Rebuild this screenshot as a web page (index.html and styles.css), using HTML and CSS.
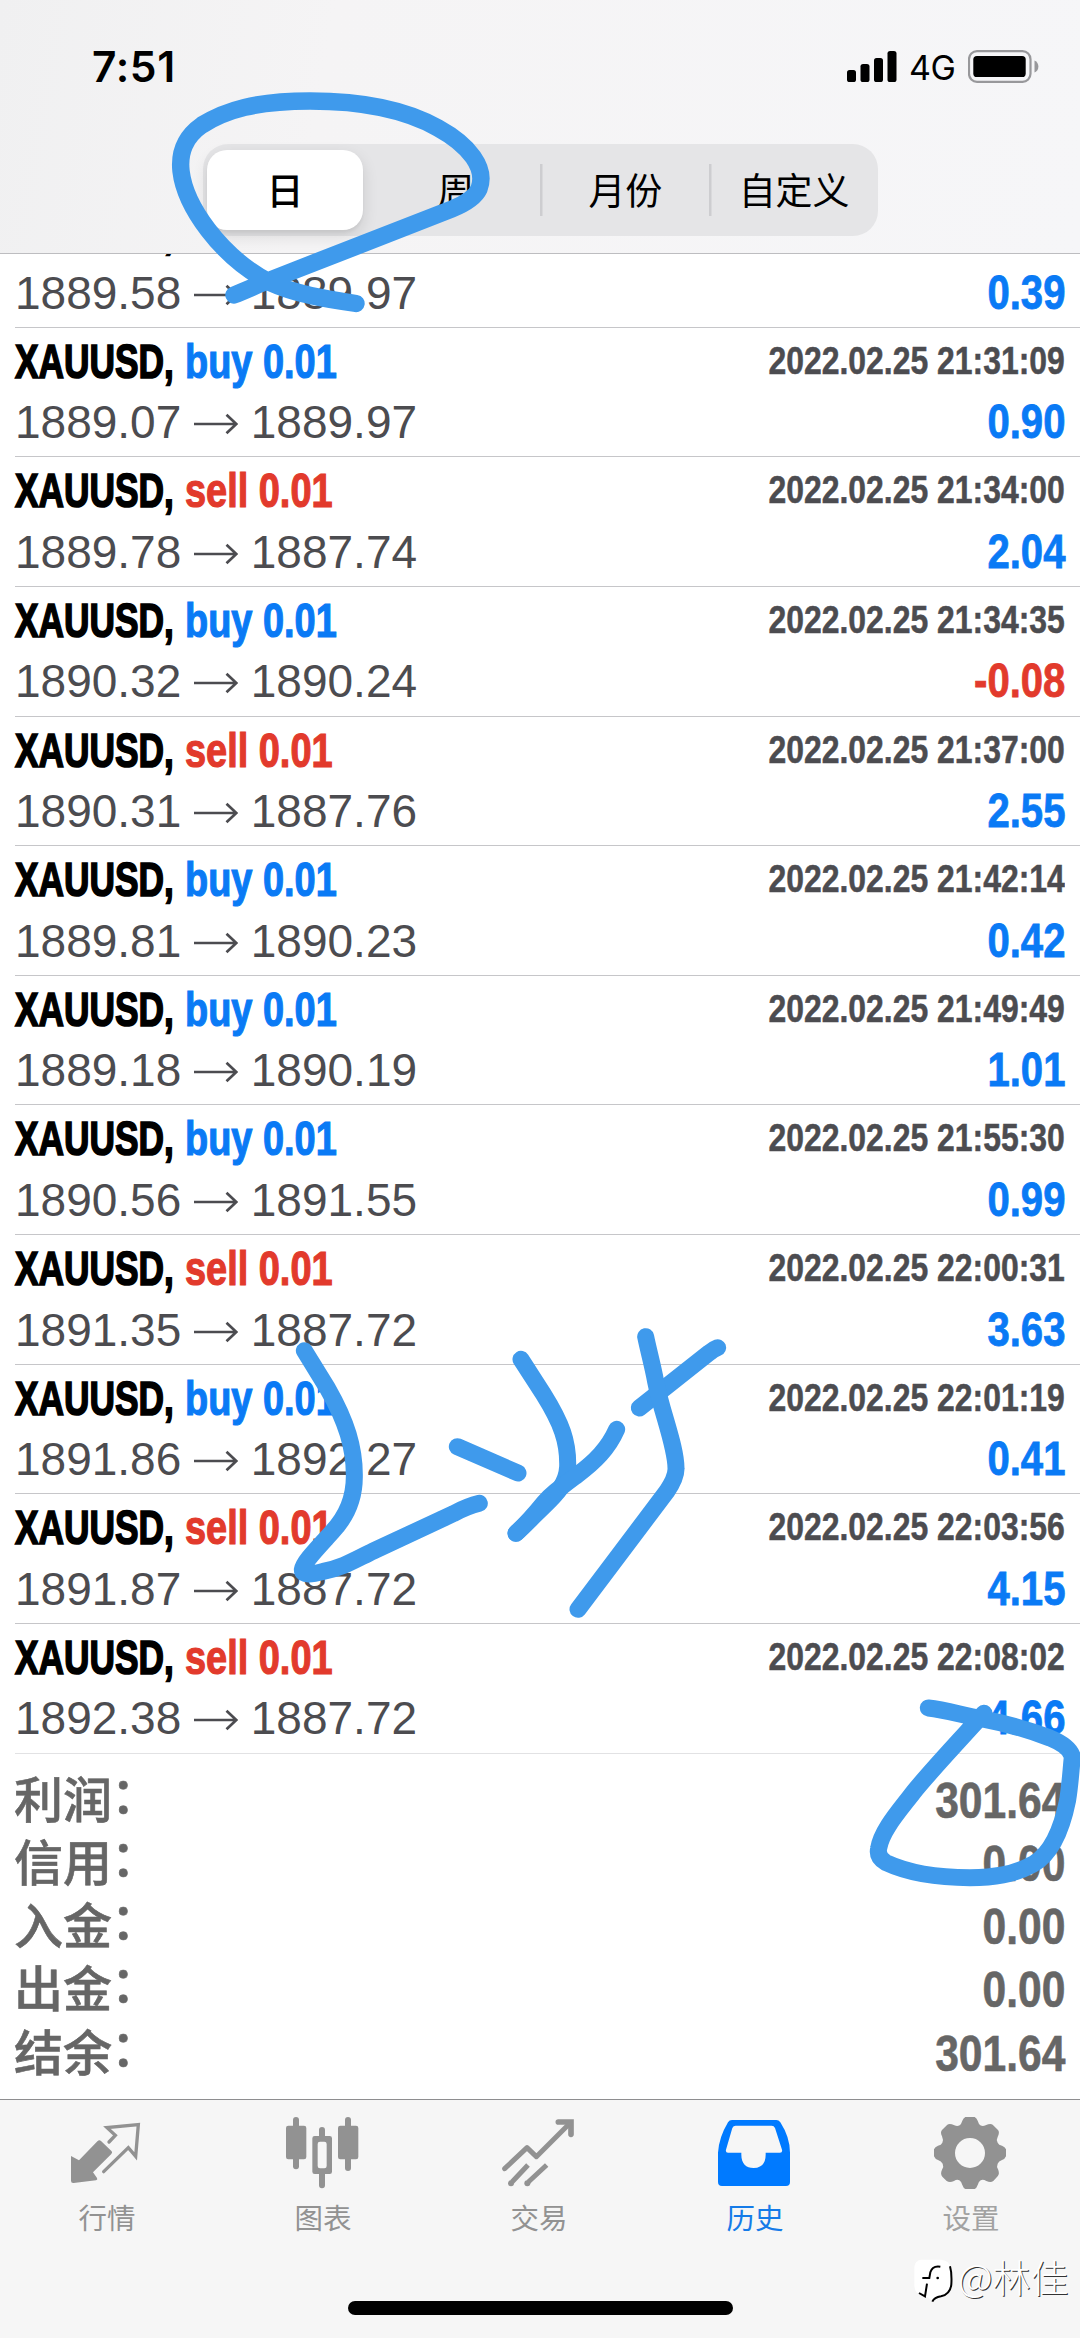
FILE: index.html
```html
<!DOCTYPE html>
<html lang="zh-CN">
<head>
<meta charset="utf-8">
<title>历史</title>
<link rel="stylesheet" href="styles.css">
</head>
<body>
<svg class="defs" width="0" height="0" aria-hidden="true">
  <symbol id="arrow" viewBox="0 0 44 22"><path d="M0 11H42M32.5 1.8L42.3 11L32.5 20.2" fill="none" stroke="#4c4c50" stroke-width="2.7"/></symbol>
</svg>
<div class="screen">
  <header class="header">
    <div class="status">
      <span class="clock">7:51</span>
      <span class="status-right">
        <svg class="signal" width="50" height="31" viewBox="0 0 50 31"><rect x="0" y="19" width="9" height="12" rx="2.6"/><rect x="13.5" y="13" width="9" height="18" rx="2.6"/><rect x="27" y="7" width="9" height="24" rx="2.6"/><rect x="40.5" y="0" width="9" height="31" rx="2.6"/></svg>
        <span class="net">4G</span>
        <svg class="battery" width="71" height="33" viewBox="0 0 71 33"><rect x="1" y="1.2" width="61.5" height="30.6" rx="8" fill="none" stroke="#98989b" stroke-width="2.2"/><rect x="5.3" y="6" width="52.4" height="21" rx="3.6"/><path d="M66.5 10.4c5.2 2 5.2 10.2 0 12.2z" fill="#98989b"/></svg>
      </span>
    </div>
    <nav class="segments">
      <span class="segment selected">日</span>
      <span class="segment">周</span>
      <span class="segment divided">月份</span>
      <span class="segment divided">自定义</span>
    </nav>
  </header>

  <main class="list">
    <section class="deal">
      <div class="top"><b class="symbol">XAUUSD,</b><b class="side buy">buy 0.01</b></div>
      <div class="bottom"><span>1889.58</span><svg class="arrow"><use href="#arrow"/></svg><span>1889.97</span><b class="profit">0.39</b></div>
    </section>
    <section class="deal">
      <div class="top"><b class="symbol">XAUUSD,</b><b class="side buy">buy 0.01</b><b class="time">2022.02.25 21:31:09</b></div>
      <div class="bottom"><span>1889.07</span><svg class="arrow"><use href="#arrow"/></svg><span>1889.97</span><b class="profit">0.90</b></div>
    </section>
    <section class="deal">
      <div class="top"><b class="symbol">XAUUSD,</b><b class="side sell">sell 0.01</b><b class="time">2022.02.25 21:34:00</b></div>
      <div class="bottom"><span>1889.78</span><svg class="arrow"><use href="#arrow"/></svg><span>1887.74</span><b class="profit">2.04</b></div>
    </section>
    <section class="deal">
      <div class="top"><b class="symbol">XAUUSD,</b><b class="side buy">buy 0.01</b><b class="time">2022.02.25 21:34:35</b></div>
      <div class="bottom"><span>1890.32</span><svg class="arrow"><use href="#arrow"/></svg><span>1890.24</span><b class="profit loss">-0.08</b></div>
    </section>
    <section class="deal">
      <div class="top"><b class="symbol">XAUUSD,</b><b class="side sell">sell 0.01</b><b class="time">2022.02.25 21:37:00</b></div>
      <div class="bottom"><span>1890.31</span><svg class="arrow"><use href="#arrow"/></svg><span>1887.76</span><b class="profit">2.55</b></div>
    </section>
    <section class="deal">
      <div class="top"><b class="symbol">XAUUSD,</b><b class="side buy">buy 0.01</b><b class="time">2022.02.25 21:42:14</b></div>
      <div class="bottom"><span>1889.81</span><svg class="arrow"><use href="#arrow"/></svg><span>1890.23</span><b class="profit">0.42</b></div>
    </section>
    <section class="deal">
      <div class="top"><b class="symbol">XAUUSD,</b><b class="side buy">buy 0.01</b><b class="time">2022.02.25 21:49:49</b></div>
      <div class="bottom"><span>1889.18</span><svg class="arrow"><use href="#arrow"/></svg><span>1890.19</span><b class="profit">1.01</b></div>
    </section>
    <section class="deal">
      <div class="top"><b class="symbol">XAUUSD,</b><b class="side buy">buy 0.01</b><b class="time">2022.02.25 21:55:30</b></div>
      <div class="bottom"><span>1890.56</span><svg class="arrow"><use href="#arrow"/></svg><span>1891.55</span><b class="profit">0.99</b></div>
    </section>
    <section class="deal">
      <div class="top"><b class="symbol">XAUUSD,</b><b class="side sell">sell 0.01</b><b class="time">2022.02.25 22:00:31</b></div>
      <div class="bottom"><span>1891.35</span><svg class="arrow"><use href="#arrow"/></svg><span>1887.72</span><b class="profit">3.63</b></div>
    </section>
    <section class="deal">
      <div class="top"><b class="symbol">XAUUSD,</b><b class="side buy">buy 0.01</b><b class="time">2022.02.25 22:01:19</b></div>
      <div class="bottom"><span>1891.86</span><svg class="arrow"><use href="#arrow"/></svg><span>1892.27</span><b class="profit">0.41</b></div>
    </section>
    <section class="deal">
      <div class="top"><b class="symbol">XAUUSD,</b><b class="side sell">sell 0.01</b><b class="time">2022.02.25 22:03:56</b></div>
      <div class="bottom"><span>1891.87</span><svg class="arrow"><use href="#arrow"/></svg><span>1887.72</span><b class="profit">4.15</b></div>
    </section>
    <section class="deal last">
      <div class="top"><b class="symbol">XAUUSD,</b><b class="side sell">sell 0.01</b><b class="time">2022.02.25 22:08:02</b></div>
      <div class="bottom"><span>1892.38</span><svg class="arrow"><use href="#arrow"/></svg><span>1887.72</span><b class="profit">4.66</b></div>
    </section>
    <section class="summary">
      <div class="total"><span>利润<i>：</i></span><b>301.64</b></div>
      <div class="total"><span>信用<i>：</i></span><b>0.00</b></div>
      <div class="total"><span>入金<i>：</i></span><b>0.00</b></div>
      <div class="total"><span>出金<i>：</i></span><b>0.00</b></div>
      <div class="total"><span>结余<i>：</i></span><b>301.64</b></div>
    </section>
  </main>

  <footer class="tabs">
    <div class="tab">
      <svg viewBox="30 48 228 222"><path fill="#929292" d="M36 168L60 181L116 123Q121 118 126 123L158 154Q161 158 157 162L102 217L114 234Q117 239 111 241L44 249Q36 250 36 242Z"/><path d="M150 126L169 106L144 83L238 74L230 169L208 143L134 215" fill="none" stroke="#929292" stroke-width="10" stroke-linecap="round" stroke-linejoin="miter"/></svg>
      <span>行情</span>
    </div>
    <div class="tab">
      <svg viewBox="678 48 228 222"><g fill="#929292"><rect x="681" y="77" width="61" height="101" rx="7"/><rect x="702" y="51" width="18" height="157" rx="9"/><rect x="837" y="77" width="61" height="101" rx="7"/><rect x="858" y="51" width="18" height="162" rx="9"/><path d="M780 108V90a9 9 0 0 1 18 0V108H812Q819 108 819 115V215Q819 222 812 222H798V256a9 9 0 0 1-18 0V222H767Q760 222 760 215V115Q760 108 767 108ZM783 125Q776 125 776 132V198Q776 205 783 205H796Q803 205 803 198V132Q803 125 796 125Z" fill-rule="evenodd"/></g></svg>
      <span>图表</span>
    </div>
    <div class="tab">
      <svg viewBox="36 48 228 222"><g fill="none" stroke="#929292" stroke-width="15"><path d="M47 206L114 143L142 170L244 68" stroke-linejoin="round" stroke-linecap="round"/><path d="M208 66H246V103" stroke-width="17" stroke-linecap="round"/><path d="M117 195L69 246M173 195L118 246"/></g><g fill="#929292"><circle cx="66" cy="250" r="9"/><circle cx="115" cy="250" r="9"/></g></svg>
      <span>交易</span>
    </div>
    <div class="tab active">
      <svg viewBox="684 48 228 222"><path fill="#007aff" fill-rule="evenodd" d="M729 60H862Q869 60 874 67Q903 112 903 158V246Q903 258 891 258H699Q687 258 687 246V158Q690 112 717 67Q721 60 729 60ZM740 77Q733 77 730 84L711 149Q709 157 717 158H757V164C757 190 771 204 794 204S830 190 830 164V158H873Q881 157 879 149L858 84Q855 77 848 77Z"/></svg>
      <span>历史</span>
    </div>
    <div class="tab muted">
      <svg viewBox="102 48 228 222"><path fill="#929292" fill-rule="evenodd" d="M199 51H227Q233 54 236 62Q239 72 244 76Q251 80 260 76Q274 69 281 74L297 90Q303 96 296 111Q291 119 296 128Q299 135 309 137Q318 140 321 148V169Q318 177 309 180Q299 183 296 191Q292 200 297 208Q303 221 296 229L283 243Q275 249 262 243Q252 237 245 241Q239 245 236 255Q233 264 227 267H199Q193 264 190 255Q187 245 181 241Q174 237 165 243Q152 249 143 243L130 230Q123 221 129 209Q135 199 131 191Q127 183 117 180Q108 177 105 169V148Q108 140 117 137Q127 135 130 128Q134 120 129 109Q123 97 129 90L145 74Q152 69 166 76Q175 80 182 76Q187 72 190 62Q193 54 199 51ZM213 114a45 45 0 1 0 0 90a45 45 0 1 0 0-90Z"/></svg>
      <span>设置</span>
    </div>
    <div class="home"></div>
  </footer>

  <svg class="ink" width="1080" height="2338" viewBox="0 0 1080 2338">
    <path d="M234 295C247 290 257 285 270 280L452 209Q474 200 479 189C487 168 469 145 438 128C408 111 366 101 310 101C256 101 226 110 202 125C185 137 179 152 181 171C185 206 220 256 269 282C295 294 325 299 356 303.5"/>
    <g transform="translate(240 1290) scale(.33333)">
      <path d="M193 182L262 294C320 395 344 475 343 560C343 620 320 680 275 727C230 777 190 817 187 839C187 857 215 854 250 844C310 832 340 812 400 783L640 671Q684 648 718 640"/>
      <path d="M652 470L834 549"/>
      <path d="M843 208L910 312C965 400 985 455 983 530C980 590 940 620 890 670Q850 710 828 730"/>
      <path d="M1130 418C1105 475 1065 515 1010 556C955 597 933 613 912 638Q870 690 828 730"/>
      <path d="M1198 354L1408 188Q1420 178 1433 173"/>
      <path d="M1217 140C1225 180 1238 225 1247 275C1266 370 1308 470 1308 535Q1309 562 1280 605L1014 958"/>
    </g>
    <g transform="translate(780 1640) scale(.33333)">
      <path d="M445 204C500 210 550 227 600 235C690 252 760 275 810 294Q870 319 877 350C872 400 871 430 863 480C845 570 815 640 760 672C700 705 640 713 570 713C470 713 380 697 318 668Q290 652 296 625C305 570 360 510 400 457C450 395 530 310 612 220"/>
    </g>
  </svg>

  <div class="watermark">
    <svg width="40" height="46" viewBox="0 0 120 138"><path d="M24 8H84Q112 10 114 38V88Q112 118 84 122Q68 126 58 134Q48 118 28 116Q4 110 4 84V30Q6 10 24 8Z" fill="#fff"/><path d="M111 28Q117 48 115 82Q112 112 84 118Q64 121 58 134" fill="none" stroke="#000" stroke-width="6"/><path d="M82 29Q58 25 52 46L49 63H28M42 80L36 118L18 108" fill="none" stroke="#000" stroke-width="6"/><circle cx="74" cy="63" r="4"/></svg>
    <span>@林佳</span>
  </div>
</div>
</body>
</html>
```
FILE: styles.css
```css
* { box-sizing: border-box; }

body {
  margin: 0;
  background: #fff;
  font-family: "Liberation Sans", "Noto Sans CJK SC", sans-serif;
}

.defs { position: absolute; }

.screen {
  position: relative;
  display: flex;
  flex-direction: column;
  width: 1080px;
  height: 2338px;
  overflow: hidden;
}

/* Status bar and period switch */
.header {
  flex: none;
  height: 254px;
  background: linear-gradient(100deg, #f0f0f1 0%, #f5f4f5 30%, #f6f6f8 100%);
  border-bottom: 1px solid #bdbdc0;
}

.status {
  display: flex;
  justify-content: space-between;
  align-items: center;
  height: 144px;
  padding: 0 41px 12px 92px;
  font-family: Inter, sans-serif;
}

.clock {
  font-size: 42.5px;
  font-weight: 600;
  letter-spacing: .6px;
}

.status-right { display: flex; align-items: center; }

.net {
  width: 47px;
  margin: 2px 12px 0 12px;
  font-size: 34px;
  font-weight: 400;
  letter-spacing: -0.5px;
}

.segments {
  display: grid;
  grid-template-columns: repeat(4, 1fr);
  width: 675px;
  height: 92px;
  margin-left: 202.5px;
  padding: 6px 0;
  border-radius: 25px;
  background: #e5e5e7;
}

.segment {
  display: flex;
  align-items: center;
  justify-content: center;
  padding-bottom: 3px;
  font-family: "Noto Sans CJK SC", sans-serif;
  font-size: 37px;
}

.segment.selected {
  width: 156px;
  margin-left: 4.5px;
  border-radius: 20px;
  background: #fff;
  font-weight: 500;
  box-shadow: 0 6px 16px rgba(0, 0, 0, .12), 0 3px 3px rgba(0, 0, 0, .04);
}

.segment.divided {
  padding-left: 2px;
  background: linear-gradient(#cdcdd0, #cdcdd0) left center / 2.5px 52px no-repeat;
}

/* Deals */
.list {
  flex: none;
  height: 1844.5px;
  overflow: hidden;
}

.deal {
  height: 129.64px;
  margin-left: 15px;
  padding: 6px 15px 0 0;
  border-bottom: 1px solid #c6c6c9;
}

.deal:first-child { margin-top: -56px; }
.deal.last { border-color: #e2e2e4; }

.top {
  display: flex;
  align-items: flex-start;
  height: 58.5px;
  font-size: 48px;
  line-height: 56px;
  white-space: nowrap;
}

.symbol {
  width: 169.5px;
  transform: scaleX(.735);
  transform-origin: left;
  -webkit-text-stroke: 1.7px currentColor;
}

.side {
  transform: scaleX(.79);
  transform-origin: left;
  -webkit-text-stroke: 1.2px currentColor;
}

.buy, .profit { color: #0a7af5; }
.sell, .profit.loss { color: #e23a2c; }

.time {
  margin-left: auto;
  color: #4c4c50;
  font-size: 38px;
  line-height: 55px;
  transform: scaleX(.84);
  transform-origin: right;
  -webkit-text-stroke: .5px currentColor;
}

.bottom {
  display: flex;
  height: 60px;
  color: #4c4c50;
  font-size: 46px;
  line-height: 60px;
}

.arrow {
  width: 44px;
  height: 22px;
  margin: 21px 13px 0 12.5px;
}

.profit {
  margin-left: auto;
  font-size: 48px;
  transform: scaleX(.835);
  transform-origin: right;
  -webkit-text-stroke: .8px currentColor;
}

/* Totals */
.summary { padding: 14px 15px 0 14px; }

.total {
  display: flex;
  justify-content: space-between;
  height: 63.33px;
  color: #666;
  line-height: 63px;
}

.total span {
  margin-top: -3px;
  font-family: "Noto Sans CJK SC", sans-serif;
  font-size: 49px;
  font-weight: 500;
  -webkit-text-stroke: .6px currentColor;
}

/* The colon sits at mid height of the characters */
.total i {
  display: inline-block;
  font-style: normal;
  transform: translate(-1px, -5px);
}

.total b {
  margin-top: 1px;
  font-size: 49.5px;
  transform: scaleX(.86);
  transform-origin: right;
  -webkit-text-stroke: .6px currentColor;
}

/* Tab bar */
.tabs {
  flex: 1;
  display: grid;
  grid-template-columns: repeat(5, 1fr);
  grid-template-rows: 201px 15px;
  justify-items: center;
  background: #f6f6f6;
  border-top: 1px solid #8e8e90;
}

.tab {
  display: flex;
  flex-direction: column;
  align-items: center;
  padding: 16px 2px 0 0;
  color: #929292;
  font-family: "Noto Sans CJK SC", sans-serif;
  font-size: 28.5px;
  line-height: 40px;
}

.tab svg { width: 76px; height: 74px; margin-bottom: 7px; }
.tab.active { color: #157be8; }
.tab.muted { color: #a2a2a2; }

.home {
  grid-column: 1 / -1;
  width: 385px;
  height: 14.5px;
  border-radius: 8px;
  background: #000;
}

/* Freehand marks over the page */
.ink {
  position: absolute;
  left: 0;
  top: 0;
  fill: none;
  stroke: #3f9aec;
  stroke-width: 17.4;
  stroke-linecap: round;
  stroke-linejoin: round;
}

.ink g { stroke-width: 51; }

.watermark {
  position: absolute;
  left: 913px;
  top: 2257px;
  display: flex;
  align-items: center;
  gap: 5px;
  color: #fff;
  font-family: "Noto Sans CJK SC", sans-serif;
  font-size: 38px;
  font-weight: 300;
  line-height: 42px;
  text-shadow: 1px 1px 0 #333;
}

.watermark span { margin-top: -9px; }
```
